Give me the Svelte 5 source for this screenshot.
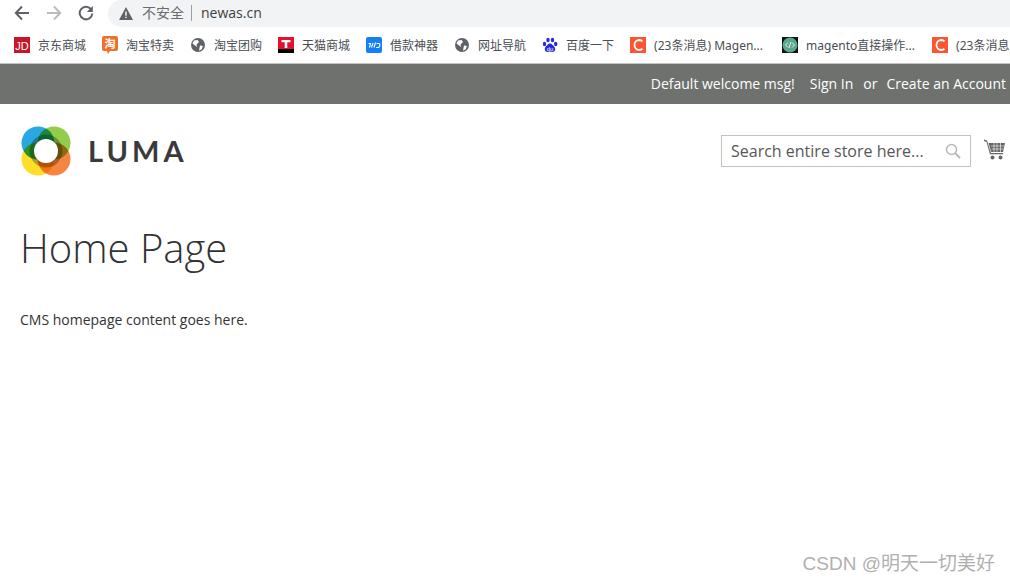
<script lang="ts">
  type Bookmark = { label: string; icon: string; width?: number };

  const bookmarks: Bookmark[] = [
    { label: "京东商城", icon: "jd" },
    { label: "淘宝特卖", icon: "tao" },
    { label: "淘宝团购", icon: "globe" },
    { label: "天猫商城", icon: "tmall" },
    { label: "借款神器", icon: "loan" },
    { label: "网址导航", icon: "globe" },
    { label: "百度一下", icon: "baidu" },
    { label: "(23条消息) Magen...", icon: "csdn", width: 112 },
    { label: "magento直接操作...", icon: "code", width: 110 },
    { label: "(23条消息) Magento", icon: "csdn" },
  ];
</script>

<div class="page">
  <div class="toolbar">
    <div class="nav">
      <svg width="16" height="16" viewBox="0 0 16 16" fill="none" stroke="#5f6368" stroke-width="2">
        <path d="M15 8H2M8 1.5 1.8 8 8 14.500" />
      </svg>
      <svg width="16" height="16" viewBox="0 0 16 16" fill="none" stroke="#b9bbbe" stroke-width="2">
        <path d="M1 8h13M8 1.500 14.200 8 8 14.500" />
      </svg>
      <svg width="16" height="16" viewBox="0 0 16 16" fill="none" stroke="#5f6368" stroke-width="2">
        <path d="M13.300 4.600A6.300 6.300 0 1 0 14.300 8.500" />
        <path d="M14.800 1v6h-6z" fill="#5f6368" stroke="none" />
      </svg>
    </div>
    <div class="omnibox">
      <svg class="warn" width="14" height="13" viewBox="0 0 14 13">
        <path d="M7 0 14 13H0z" fill="#5f6368" />
        <path d="M6.300 4.500h1.400v4.300H6.300zM6.300 9.700h1.400v1.400H6.300z" fill="#fff" />
      </svg>
      <span class="insecure">不安全</span>
      <span class="sep"></span>
      <span class="host">newas.cn</span>
    </div>
  </div>

  <div class="bookmarks">
    {#each bookmarks as b}
      <div class="bookmark">
        {#if b.icon === "jd"}
          <svg width="16" height="16" viewBox="0 0 16 16">
            <rect width="16" height="16" fill="#c9152b" />
            <text x="8" y="12.500" text-anchor="middle" class="ico-text">JD</text>
          </svg>
        {:else if b.icon === "tao"}
          <svg width="16" height="18" viewBox="0 0 16 18">
            <path d="M2 0h12a2 2 0 0 1 2 2v11a2 2 0 0 1-2 2H8l-2 3-1-3H2a2 2 0 0 1-2-2V2a2 2 0 0 1 2-2z" fill="#f0702a" />
            <text x="8" y="12" text-anchor="middle" class="ico-cjk">淘</text>
          </svg>
        {:else if b.icon === "globe"}
          <svg width="16" height="16" viewBox="0 0 16 16">
            <circle cx="8" cy="8" r="7" fill="#5f6368" />
            <path d="M4 3.500 7.500 3 9 5 6.500 7.500 7 10 4.500 8 2.500 6.500zM10 8.500l3 .5-1.500 3.500-2.500 1 .5-2.500z" fill="#fff" />
          </svg>
        {:else if b.icon === "tmall"}
          <svg width="16" height="16" viewBox="0 0 16 16">
            <rect width="16" height="16" fill="#e60f2d" />
            <rect y="12" width="16" height="4" fill="#000" />
            <path d="M3.500 3h9v2.200H9.300V11H6.700V5.200H3.500z" fill="#fff" />
          </svg>
        {:else if b.icon === "loan"}
          <svg width="16" height="16" viewBox="0 0 16 16">
            <rect width="16" height="16" rx="2" fill="#1580f5" />
            <path d="M2.500 6.500h2L3.500 10.500M7 6 5.500 10.500M9.500 5.500 8 10.500M10.500 6.500h2.300a1 1 0 0 1 1 1.300l-.4 1.500a1.500 1.500 0 0 1-1.400 1.200H10" fill="none" stroke="#fff" stroke-width="1.100" />
          </svg>
        {:else if b.icon === "baidu"}
          <svg width="16" height="16" viewBox="0 0 16 16" fill="#2529d8">
            <ellipse cx="2.500" cy="7" rx="1.700" ry="2.200" />
            <ellipse cx="6" cy="3" rx="1.700" ry="2.300" />
            <ellipse cx="10.500" cy="3" rx="1.700" ry="2.300" />
            <ellipse cx="13.700" cy="7" rx="1.700" ry="2.200" />
            <path d="M8 6.500c2 0 3 2 4.500 3.500 1.500 2 .5 5-2 5-1 0-1.500-.4-2.500-.4s-1.500.4-2.500.4c-2.500 0-3.500-3-2-5C5 8.500 6 6.500 8 6.500z" />
            <text x="8" y="14" text-anchor="middle" class="ico-du">du</text>
          </svg>
        {:else if b.icon === "csdn"}
          <svg width="16" height="16" viewBox="0 0 16 16">
            <rect width="16" height="16" fill="#fc5531" />
            <path d="M12.500 4.300A5 5 0 0 0 9.300 3C6.500 3 4.500 5.200 4.500 8s2 5 4.800 5a5 5 0 0 0 3.200-1.200" fill="none" stroke="#fff" stroke-width="1.800" />
          </svg>
        {:else}
          <svg width="16" height="16" viewBox="0 0 16 16">
            <rect width="16" height="16" fill="#0d1512" />
            <circle cx="8" cy="8" r="7.500" fill="#5aa68f" />
            <path d="M6 5.500 3.500 8 6 10.500M10 5.500 12.500 8 10 10.500M9 5 7 11" fill="none" stroke="#e6f2ee" stroke-width="1" />
          </svg>
        {/if}
        <span style:width={b.width ? `${b.width}px` : undefined}>{b.label}</span>
      </div>
    {/each}
  </div>

  <header class="panel">
    <span>Default welcome msg!</span>
    <a href="#signin" class="signin">Sign In</a>
    <span class="or">or</span>
    <a href="#create">Create an Account</a>
  </header>

  <div class="header">
    <div class="logo">
      <svg class="mark" width="50" height="50" viewBox="0 0 50 50">
        <circle cx="17" cy="17" r="16.500" fill="#2aa8e4" />
        <circle cx="33" cy="17" r="16.500" fill="#93cd4c" />
        <circle cx="17" cy="33" r="16.500" fill="#ffde2a" />
        <circle cx="33" cy="33" r="16.500" fill="#f78440" />
        <circle cx="25" cy="25" r="16.500" fill="#b4b9ac" />
        <circle cx="25" cy="25" r="12" fill="#fff" class="hole" />
      </svg>
      <span class="wordmark">LUMA</span>
    </div>
    <div class="actions">
      <div class="search">
        <span>Search entire store here...</span>
        <svg width="16" height="16" viewBox="0 0 16 16" fill="none" stroke="#b8b8b8">
          <circle cx="6.500" cy="6.500" r="5" stroke-width="1.500" />
          <path d="M10.300 10.300 15 15" stroke-width="2" />
        </svg>
      </div>
      <svg class="cart" width="21" height="21" viewBox="0 0 21 21" fill="#666">
        <path d="M0 0.500 3 1.500 7 14h12v1.200H6L2.500 3 0 2z" />
        <path d="M4.500 4H21l-2 9H7.300z" />
        <path d="M7 7h13M7.800 10h11.500M10 4v9M13 4v9M16.500 4v9" stroke="#fff" stroke-width="0.600" fill="none" />
        <circle cx="8.500" cy="18.500" r="2" />
        <circle cx="16.500" cy="18.500" r="2" />
      </svg>
    </div>
  </div>

  <main class="content">
    <h1>Home Page</h1>
    <p>CMS homepage content goes here.</p>
  </main>

  <div class="watermark">CSDN @明天一切美好</div>
</div>

<style>
  :global(body) {
    margin: 0;
    background: #fff;
  }

  .page {
    position: relative;
    width: 1010px;
    height: 583px;
    overflow: hidden;
    font-family: "Open Sans", sans-serif;
    color: #333;
  }

  .toolbar {
    display: flex;
    height: 27px;
  }

  .nav {
    display: flex;
    gap: 16px;
    width: 108px;
    padding: 5px 0 0 14px;
    box-sizing: border-box;
  }

  .omnibox {
    flex: 1;
    display: flex;
    align-items: center;
    height: 27px;
    padding-left: 11px;
    background: #f1f3f4;
    border-radius: 14px 0 0 14px;
    font-family: "Liberation Sans", "Noto Sans CJK SC", sans-serif;
  }

  .warn {
    margin: 0 9px 1px 0;
  }

  .insecure {
    margin-bottom: 3px;
    font-size: 14px;
    color: #6b6b6b;
  }

  .sep {
    width: 1px;
    height: 16px;
    margin: 0 9px 1px 7px;
    background: #9aa0a6;
  }

  .host {
    margin-bottom: 2px;
    font-family: "Open Sans", sans-serif;
    font-size: 14px;
    color: #3c4043;
  }

  .bookmarks {
    display: flex;
    align-items: center;
    gap: 16px;
    height: 36px;
    padding-left: 14px;
    border-bottom: 1px solid #c4c4c4;
    white-space: nowrap;
    font-family: "Noto Sans", "Noto Sans CJK SC", sans-serif;
    font-size: 12px;
    color: #4a4d52;
  }

  .bookmark {
    display: flex;
    align-items: center;
    gap: 8px;
    flex: none;
  }

  .ico-text {
    font-family: "Liberation Sans", sans-serif;
    font-size: 11px;
    fill: #fff;
  }

  .ico-cjk {
    font-family: "Noto Sans CJK SC", sans-serif;
    font-size: 11px;
    font-weight: 700;
    fill: #fff;
  }

  .ico-du {
    font-family: "Liberation Sans", sans-serif;
    font-size: 6px;
    fill: #fff;
  }

  .panel {
    display: flex;
    justify-content: flex-end;
    align-items: center;
    height: 40px;
    padding: 0 4px 2px 0;
    box-sizing: border-box;
    background: #6e716e;
    color: #fff;
    font-size: 14px;
  }

  .panel a {
    color: #fff;
    text-decoration: none;
  }

  .signin {
    margin-left: 15px;
  }

  .or {
    margin: 0 9px 0 10px;
  }

  .header {
    display: flex;
    justify-content: space-between;
    align-items: flex-start;
    height: 97px;
    padding: 22px 5px 0 21px;
    box-sizing: border-box;
  }

  .logo {
    display: flex;
    align-items: center;
    gap: 17px;
  }

  .mark {
    isolation: isolate;
  }

  .mark circle {
    mix-blend-mode: multiply;
  }

  .mark .hole {
    mix-blend-mode: normal;
  }

  .wordmark {
    margin-bottom: 2px;
    font-family: Lato, sans-serif;
    font-size: 29px;
    font-weight: 700;
    letter-spacing: 4px;
    color: #3a3a3a;
  }

  .actions {
    display: flex;
    align-items: flex-start;
    gap: 13px;
    padding-top: 9px;
  }

  .search {
    display: flex;
    justify-content: space-between;
    align-items: center;
    width: 250px;
    height: 32px;
    padding: 0 9px;
    box-sizing: border-box;
    border: 1px solid #c2c2c2;
    font-size: 16px;
    color: #575757;
  }

  .cart {
    margin-top: 4px;
  }

  .content {
    padding: 0 20px;
  }

  h1 {
    margin: 0;
    padding-top: 22px;
    font-size: 40px;
    font-weight: 300;
    line-height: 50px;
    color: #333;
  }

  p {
    margin: 37px 0 0;
    font-size: 14px;
    line-height: 20px;
  }

  .watermark {
    position: absolute;
    right: 15px;
    bottom: 8px;
    font-family: "Liberation Sans", "Noto Sans CJK SC", sans-serif;
    font-size: 19px;
    color: #b0b0b0;
  }
</style>
